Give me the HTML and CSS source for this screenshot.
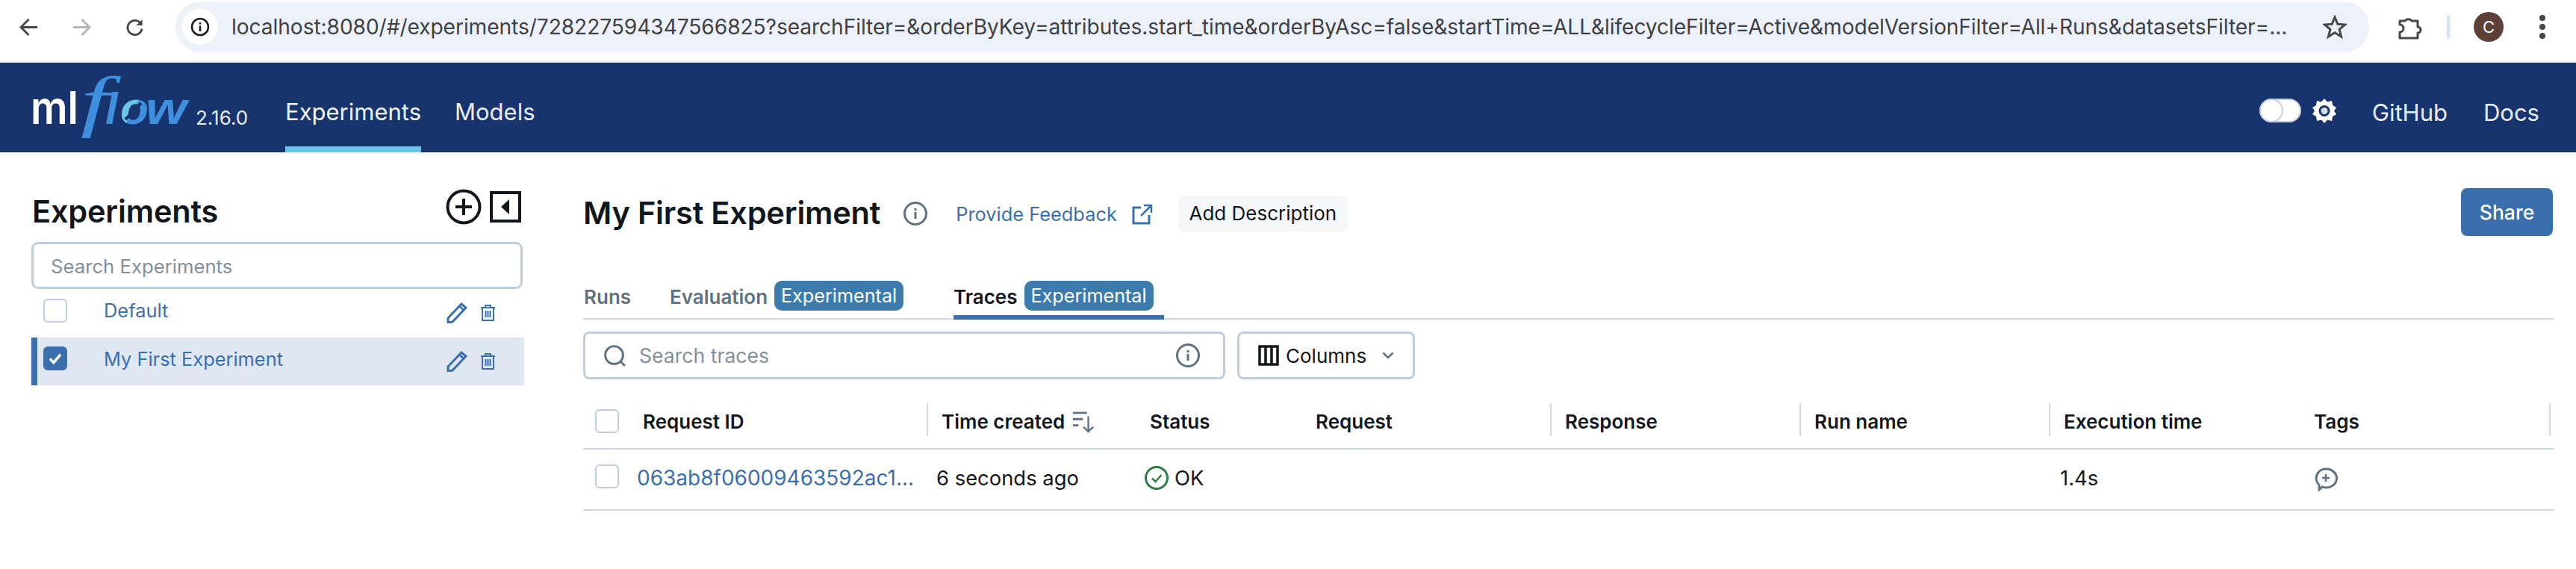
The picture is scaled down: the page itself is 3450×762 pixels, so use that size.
FILE: index.html
```html
<!DOCTYPE html>
<html lang="en">
<head>
<meta charset="utf-8">
<title>MLflow</title>
<link rel="stylesheet" href="styles.css">
</head>
<body>
<header class="browser">
  <div class="nav-btns">
    <svg class="bi" viewBox="0 0 26 26"><path d="M25 13H3M13 2 2 13l11 11" fill="none" stroke="#474747" stroke-width="3"/></svg>
    <svg class="bi" viewBox="0 0 26 26"><path d="M1 13h22M13 2l11 11-11 11" fill="none" stroke="#b4b4b4" stroke-width="3"/></svg>
    <svg class="bi" viewBox="0 0 26 26"><path d="M21.5 8A10 10 0 1 0 23 15" fill="none" stroke="#474747" stroke-width="3"/><path d="M23.5 2v8.500h-8.500z" fill="#474747"/></svg>
  </div>
  <div class="omnibox">
    <span class="site-info"><svg viewBox="0 0 26 26" class="site-icon"><circle cx="13" cy="13" r="11" fill="none" stroke="#1f1f1f" stroke-width="2.600"/><path d="M13 11.500V19M13 7v2.600" stroke="#1f1f1f" stroke-width="2.600"/></svg></span>
    <span class="url">localhost:8080/#/experiments/728227594347566825?searchFilter=&amp;orderByKey=attributes.start_time&amp;orderByAsc=false&amp;startTime=ALL&amp;lifecycleFilter=Active&amp;modelVersionFilter=All+Runs&amp;datasetsFilter=...</span>
    <svg class="star" viewBox="0 0 32 32"><path d="M16 3l3.800 9.300 10 .7-7.700 6.400 2.500 9.700L16 23.800l-8.600 5.300 2.500-9.700L2.200 13l10-.7z" fill="none" stroke="#474747" stroke-width="3"/></svg>
  </div>
  <div class="browser-right">
    <svg class="ext" viewBox="0 0 34 34"><path d="M3 9h7a5 4 0 0 1 9 0h8v8a4 4 0 0 1 0 8v7H3v-8a5 5 0 0 0 0-10z" fill="none" stroke="#474747" stroke-width="3" stroke-linejoin="round"/></svg>
    <span class="tb-sep"></span>
    <span class="avatar">C</span>
    <svg class="dots" viewBox="0 0 10 34"><circle cx="5" cy="5" r="4"/><circle cx="5" cy="17" r="4"/><circle cx="5" cy="29" r="4"/></svg>
  </div>
</header>

<nav class="topbar">
  <div class="brand">
    <svg class="logo" viewBox="0 0 212 84">
      <defs>
        <linearGradient id="ring" x1="0" y1="0" x2="1" y2="1">
          <stop offset="0.5" stop-color="#69c5ea"/>
          <stop offset="0.5" stop-color="#3f8fdf"/>
        </linearGradient>
      </defs>
      <text class="logo-ml" x="-1" y="63" textLength="64" lengthAdjust="spacingAndGlyphs">ml</text>
      <text class="logo-f" x="44" y="63" transform="scale(1.5 1)">f</text>
      <text class="logo-l" x="99" y="63">l</text>
      <text class="logo-o" x="119" y="63" fill="url(#ring)">o</text>
      <text class="logo-w" x="153" y="63" textLength="55" lengthAdjust="spacingAndGlyphs">w</text>
      <path d="M126 57 147 35" stroke="#17346f" stroke-width="4"/>
    </svg>
    <span class="version">2.16.0</span>
  </div>
  <a class="nav-item active">Experiments</a>
  <a class="nav-item">Models</a>
  <div class="nav-right">
    <span class="toggle"><span class="knob"></span></span>
    <svg class="sun" viewBox="0 0 34 34"><path d="M17 1l4 4.500 6-1.500 1 6 5 3-3 4.500 3 4.500-5 3-1 6-6-1.500L17 34l-4-4.500-6 1.500-1-6-5-3 3-4.500L1 13l5-3 1-6 6 1.500z" fill="#fff"/><circle cx="17" cy="17.500" r="7.500" fill="#17346f"/><circle cx="17" cy="17.500" r="4.500" fill="#d5deec"/></svg>
    <a class="nav-link gh">GitHub</a>
    <a class="nav-link">Docs</a>
  </div>
</nav>

<div class="page">
  <aside class="sidebar">
    <div class="side-head">
      <h2>Experiments</h2>
      <div class="side-tools">
        <svg class="plus" viewBox="0 0 48 48"><circle cx="24" cy="24" r="21.500" fill="none" stroke="#11171c" stroke-width="4"/><path d="M24 13v22M13 24h22" stroke="#11171c" stroke-width="4"/></svg>
        <svg class="collapse" viewBox="0 0 42 42"><path d="M2 2h38v38H2z" fill="none" stroke="#11171c" stroke-width="4"/><path d="M26 11v20L15 21z" fill="#11171c"/></svg>
      </div>
    </div>
    <div class="side-search">Search Experiments</div>
    <div class="exp-row">
      <span class="check"></span>
      <span class="exp-name">Default</span>
      <svg class="pencil" viewBox="0 0 28 28"><path d="M2 21 20 2l6 5L8 26l-6 1z" fill="none" stroke="#3a6fae" stroke-width="3"/><path d="M17 5l6 5" stroke="#3a6fae" stroke-width="2.500"/></svg>
      <svg class="trash" viewBox="0 0 21 24"><path d="M1 5h19M7 5V2h7v3M3 5v17h15V5M7.500 9v9M10.500 9v9M13.500 9v9" fill="none" stroke="#3a6fae" stroke-width="2"/></svg>
    </div>
    <div class="exp-row selected">
      <span class="check on"><svg viewBox="0 0 32 32"><path d="M8 16.500l5.500 6L24 10" fill="none" stroke="#fff" stroke-width="4"/></svg></span>
      <span class="exp-name">My First Experiment</span>
      <svg class="pencil" viewBox="0 0 28 28"><path d="M2 21 20 2l6 5L8 26l-6 1z" fill="none" stroke="#3a6fae" stroke-width="3"/><path d="M17 5l6 5" stroke="#3a6fae" stroke-width="2.500"/></svg>
      <svg class="trash" viewBox="0 0 21 24"><path d="M1 5h19M7 5V2h7v3M3 5v17h15V5M7.500 9v9M10.500 9v9M13.500 9v9" fill="none" stroke="#3a6fae" stroke-width="2"/></svg>
    </div>
  </aside>

  <main class="main">
    <div class="title-row">
      <h1>My First Experiment</h1>
      <svg class="info-lg" viewBox="0 0 32 32"><circle cx="16" cy="16" r="14.500" fill="none" stroke="#5f7281" stroke-width="3"/><path d="M16 14v9M16 9v3" stroke="#5f7281" stroke-width="3"/></svg>
      <a class="feedback">Provide Feedback</a>
      <svg class="extlink" viewBox="0 0 28 28"><path d="M12 5H2v21h21V15" fill="none" stroke="#3a6fae" stroke-width="3"/><path d="M12 16 26 2M16 2h10v10" fill="none" stroke="#3a6fae" stroke-width="2.500"/></svg>
      <span class="add-desc">Add Description</span>
      <span class="share">Share</span>
    </div>
    <div class="tabs">
      <span class="tab first">Runs</span>
      <span class="tab second">Evaluation<span class="badge">Experimental</span></span>
      <span class="tab current">Traces<span class="badge">Experimental</span></span>
    </div>
    <div class="filters">
      <div class="trace-search">
        <svg class="mag" viewBox="0 0 30 30"><circle cx="14" cy="14" r="12.300" fill="none" stroke="#5f7281" stroke-width="3"/><path d="M23 23l6 6" stroke="#5f7281" stroke-width="3"/></svg>
        <span class="ph">Search traces</span>
        <svg class="info-sm" viewBox="0 0 32 32"><circle cx="16" cy="16" r="14.500" fill="none" stroke="#5f7281" stroke-width="3"/><path d="M16 14v9M16 9v3" stroke="#5f7281" stroke-width="3"/></svg>
      </div>
      <div class="columns-btn">
        <svg class="col-icon" viewBox="0 0 28 28"><path d="M2 2h24v24H2zM10 2v24M18 2v24" fill="none" stroke="#11171c" stroke-width="3.500"/></svg>
        <span>Columns</span>
        <svg class="chev" viewBox="0 0 16 10"><path d="M1.500 1.500 8 8l6.500-6.500" fill="none" stroke="#5f7281" stroke-width="2.600"/></svg>
      </div>
    </div>
    <div class="table">
      <div class="thead">
        <div class="th c1"><span class="check"></span><span class="th-id">Request ID</span></div>
        <div class="th c2">Time created<svg class="sort" viewBox="0 0 32 32"><path d="M1 3h20M1 12h14M1 21h8" stroke="#5f7281" stroke-width="3"/><path d="M23 8v21M16 23l7 7 7-7" fill="none" stroke="#5f7281" stroke-width="2.500"/></svg></div>
        <div class="th c3">Status</div>
        <div class="th c4">Request</div>
        <div class="th c5">Response</div>
        <div class="th c6">Run name</div>
        <div class="th c7">Execution time</div>
        <div class="th c8">Tags</div>
      </div>
      <div class="tbody">
        <div class="td c1"><span class="check"></span><a class="req-link">063ab8f06009463592ac1...</a></div>
        <div class="td c2">6 seconds ago</div>
        <div class="td c3"><svg class="ok" viewBox="0 0 32 32"><circle cx="16" cy="16" r="14.500" fill="none" stroke="#2d7d46" stroke-width="3"/><path d="M10 16.500l4.500 4.500 8-9" fill="none" stroke="#2d7d46" stroke-width="2.500"/></svg>OK</div>
        <div class="td c4"></div>
        <div class="td c5"></div>
        <div class="td c6"></div>
        <div class="td c7">1.4s</div>
        <div class="td c8"><svg class="tag-add" viewBox="0 0 34 32"><path d="M17 2a14 12.500 0 1 1-5 24l-4 4v-6.500A12.500 12.500 0 0 1 17 2z" fill="none" stroke="#5f7281" stroke-width="3"/><path d="M17 9v10M12 14h10" stroke="#5f7281" stroke-width="2.500"/></svg></div>
      </div>
    </div>
  </main>
</div>
</body>
</html>
```
FILE: styles.css
```css
* { box-sizing: border-box; }
html, body { margin: 0; padding: 0; }
body { width: 3450px; height: 762px; overflow: hidden; background: #fff; font-family: Inter, "Liberation Sans", sans-serif; color: #11171c; }

.browser { height: 84px; border-bottom: 2px solid #e6e6e0; display: flex; align-items: flex-start; padding-top: 2px; }
.nav-btns { width: 235px; height: 68px; display: flex; align-items: center; padding-left: 26px; gap: 46px; flex: none; }
.bi { width: 25px; height: 25px; flex: none; }
.omnibox { width: 2938px; height: 68px; background: #edf2fa; border-radius: 34px; display: flex; align-items: center; padding-left: 9px; flex: none; }
.site-info { width: 48px; height: 48px; border-radius: 24px; background: #fff; display: flex; align-items: center; justify-content: center; flex: none; }
.site-icon { width: 26px; height: 26px; }
.url { font-size: 28.2px; color: #3f4144; margin-left: 18px; white-space: nowrap; width: 2770px; flex: none; letter-spacing: -.1px; }
.star { width: 32px; height: 32px; margin-left: 31px; flex: none; }
.browser-right { flex: 1; height: 68px; display: flex; align-items: center; padding-left: 38px; }
.ext { width: 34px; height: 34px; flex: none; }
.tb-sep { width: 4px; height: 32px; background: #d3e3fd; border-radius: 2px; margin-left: 32px; }
.avatar { width: 40px; height: 40px; border-radius: 50%; background: #5d4037; color: #fff; font-size: 22px; display: flex; align-items: center; justify-content: center; margin-left: 32px; }
.dots { width: 10px; height: 34px; margin-left: 47px; fill: #474747; }

.topbar { height: 120px; background: #17346f; display: flex; align-items: stretch; color: #e8edf7; position: relative; }
.brand { width: 382px; display: flex; align-items: flex-start; padding-left: 42px; flex: none; }
.logo { width: 212px; height: 84px; margin-top: 19px; flex: none; overflow: visible; }
.logo-ml { font: 600 60px Inter, sans-serif; fill: #fff; }
.logo-f { font: italic 400 92px "Liberation Serif", serif; fill: #3f8fdf; }
.logo-l { font: italic 700 60px "Liberation Sans", sans-serif; fill: #3f8fdf; }
.logo-o { font: italic 700 62px "Liberation Sans", sans-serif; }
.logo-w { font: italic 700 62px "Liberation Sans", sans-serif; fill: #3f8fdf; }
.version { font-size: 26px; margin: 59px 0 0 8px; line-height: 30px; color: #e8edf7; }
.nav-item { font-size: 31px; line-height: 132px; margin-right: 45px; height: 120px; flex: none; }
.nav-item.active { border-bottom: 8px solid #69c5ea; color: #f2f5fb; }
.nav-right { margin-left: auto; display: flex; align-items: center; padding: 8px 49px 0 0; }
.toggle { width: 56px; height: 32px; border-radius: 16px; background: #fff; border: 2px solid #c3cfdd; position: relative; display: block; }
.knob { position: absolute; left: -2px; top: -2px; width: 32px; height: 32px; border-radius: 50%; background: #fff; border: 2px solid #c3cfdd; }
.sun { width: 34px; height: 34px; margin-left: 14px; }
.nav-link { font-size: 31px; margin-top: 4px; }
.gh { margin-left: 47px; margin-right: 48px; }

.page { display: flex; align-items: flex-start; }
.sidebar { width: 781px; padding: 0 0 0 42px; flex: none; }
.side-head { height: 120px; display: flex; align-items: flex-start; width: 660px; position: relative; }
.side-head h2 { margin: 52px 0 0 1px; font-size: 41.5px; line-height: 54px; font-weight: 600; letter-spacing: -.2px; }
.side-tools { margin-left: auto; display: flex; gap: 11px; align-items: center; padding: 49px 4px 0 0; }
.plus { width: 48px; height: 48px; }
.collapse { width: 42px; height: 42px; }
.side-search { width: 658px; height: 63px; border: 3px solid #c0cddb; border-radius: 9px; font-size: 25.7px; line-height: 59px; padding-left: 23px; color: #82909d; }
.exp-row { width: 660px; height: 64px; display: flex; align-items: flex-start; color: #3a6fae; font-size: 25.4px; position: relative; padding-left: 16px; }
.exp-row:nth-of-type(3) { height: 65px; }
.exp-row.selected { background: #dfe7f2; border-left: 8px solid #3a6fae; padding-left: 8px; }
.check { width: 32px; height: 32px; border: 2px solid #c0cddb; border-radius: 6px; display: block; background: #fff; flex: none; }
.exp-row > .check { margin-top: 12px; }
.exp-row:nth-of-type(3) > .check { margin-top: 13px; }
.check.on { background: #3a6fae; border-color: #3a6fae; }
.check.on svg { width: 28px; height: 28px; display: block; }
.exp-name { margin-left: 49px; line-height: 58px; flex: 1; }
.pencil { width: 28px; height: 28px; margin-top: 18px; flex: none; }
.trash { width: 21px; height: 24px; margin: 20px 38px 0 17px; flex: none; }

.main { width: 2639px; flex: none; }
.title-row { height: 172px; display: flex; align-items: flex-start; position: relative; }
.title-row h1 { margin: 53px 0 0 0; font-size: 41.5px; line-height: 56px; font-weight: 600; letter-spacing: -.2px; }
.info-lg { width: 32px; height: 32px; margin: 66px 0 0 31px; flex: none; }
.feedback { font-size: 25.4px; color: #3a6fae; margin: 63px 0 0 38px; line-height: 40px; }
.extlink { width: 28px; height: 28px; margin: 69px 0 0 20px; flex: none; }
.add-desc { background: #f5f6f7; border-radius: 8px; height: 48px; width: 227px; margin: 58px 0 0 34px; font-size: 26px; line-height: 48px; text-align: center; }
.share { margin: 48px 1px 0 auto; width: 123px; height: 64px; background: #3a6fae; color: #fff; border-radius: 8px; font-size: 26.5px; font-weight: 500; line-height: 64px; text-align: center; }
.tabs { width: 2639px; height: 52px; border-bottom: 2px solid #d1d9e4; display: flex; align-items: flex-start; font-size: 26px; font-weight: 600; color: #5f7281; }
.tab { display: flex; align-items: flex-start; line-height: 44px; flex: none; height: 52px; }
.tab.first { width: 116px; padding-left: 1px; }
.tab.second { width: 380px; }
.tab.current { color: #11171c; border-bottom: 6px solid #3a6fae; width: 282px; }
.badge { background: #3c7bac; color: #fff; border-radius: 10px; width: 173px; height: 40px; line-height: 40px; text-align: center; font-size: 25.2px; font-weight: 400; margin-left: 9px; }
.filters { display: flex; gap: 16px; margin-top: 16px; }
.trace-search { width: 860px; height: 64px; border: 3px solid #c0cddb; border-radius: 8px; display: flex; align-items: center; padding: 0 31px 0 25px; }
.mag { width: 29px; height: 29px; flex: none; }
.ph { color: #82909d; font-size: 26.6px; margin-left: 18px; flex: 1; }
.info-sm { width: 32px; height: 32px; flex: none; }
.columns-btn { width: 238px; height: 64px; border: 3px solid #c0cddb; border-radius: 8px; display: flex; align-items: center; padding-left: 25px; font-size: 26px; }
.col-icon { width: 28px; height: 28px; flex: none; margin-right: 9px; }
.chev { width: 16px; height: 10px; margin-left: 21px; flex: none; }
.table { margin-top: 32px; width: 2639px; }
.thead, .tbody { display: grid; grid-template-columns: 462px 279px 222px 334px 334px 334px 335px 339px; }
.thead { height: 62px; border-bottom: 2px solid #d1d9e4; font-size: 26px; font-weight: 600; }
.th { display: flex; align-items: flex-start; line-height: 50px; height: 44px; border-right: 2px solid #d1d9e4; padding-left: 18px; }
.th.c1 { padding-left: 16px; }
.th.c1 .check { margin-top: 8px; }
.th-id { margin-left: 32px; }
.th.c2, .th.c3, .th.c7 { border-right: none; }
.th.c8 { margin-right: 4px; }
.sort { width: 30px; height: 30px; margin: 10px 0 0 10px; }
.tbody { height: 82px; border-bottom: 2px solid #d1d9e4; font-size: 27.4px; }
.td { display: flex; align-items: center; padding-left: 11px; height: 76px; }
.td.c1 { padding-left: 16px; font-size: 28px; }
.td.c1 .check { margin-top: -4px; }
.td.c7 { padding-left: 13px; }
.req-link { color: #3a6fae; margin-left: 24px; white-space: nowrap; }
.ok { width: 32px; height: 32px; margin-right: 8px; flex: none; }
.td.c8 { padding-left: 17px; }
.tag-add { width: 34px; height: 32px; margin-top: 3px; }
```
